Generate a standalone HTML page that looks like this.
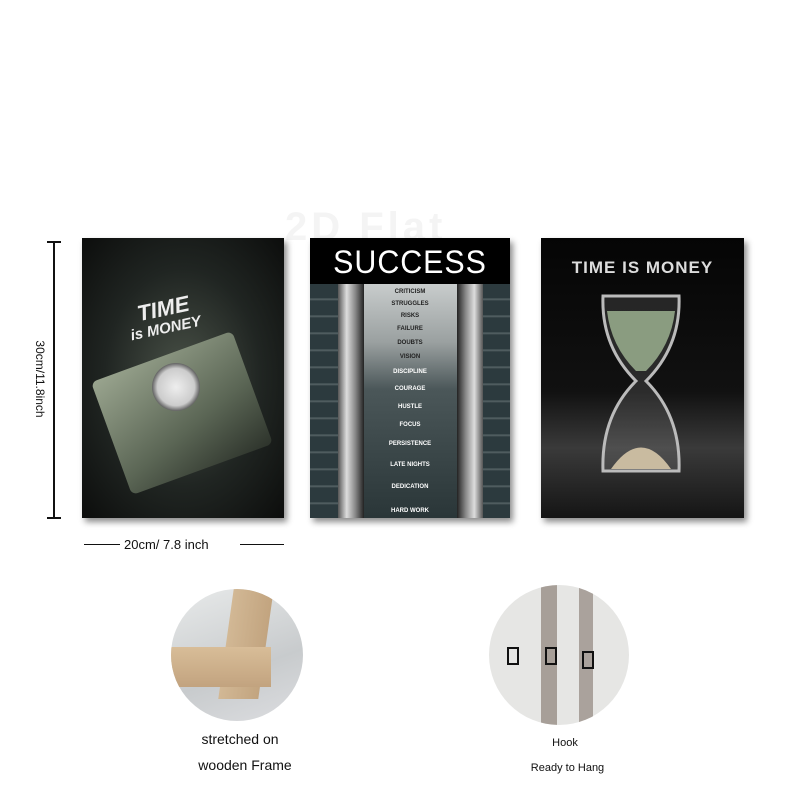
<!DOCTYPE html>
<html><head><meta charset="utf-8"><style>
body{margin:0;width:800px;height:800px;background:#fff;position:relative;overflow:hidden;font-family:"Liberation Sans",sans-serif}
.a{position:absolute}
.p{position:absolute;box-shadow:3px 4px 6px rgba(0,0,0,.45)}
.st{position:absolute;left:0;width:100%;text-align:center;color:#fff;font-size:6px;font-weight:bold}
</style></head><body>
<div class="a" style="left:285px;top:205px;font-size:40px;color:#f4f4f4;font-weight:bold;letter-spacing:4px">2D Flat</div>
<div class="a" style="left:53px;top:241px;width:2px;height:278px;background:#111"></div>
<div class="a" style="left:47px;top:241px;width:14px;height:2px;background:#111"></div>
<div class="a" style="left:47px;top:517px;width:14px;height:2px;background:#111"></div>
<div class="a" style="left:-22px;top:372px;width:124px;font-size:12px;transform:rotate(90deg);text-align:center;color:#111">30cm/11.8inch</div>
<div class="a" style="left:84px;top:544px;width:36px;height:1px;background:#111"></div>
<div class="a" style="left:240px;top:544px;width:44px;height:1px;background:#111"></div>
<div class="a" style="left:124px;top:537px;font-size:13px;color:#111">20cm/ 7.8 inch</div>
<div class="p" style="left:82px;top:238px;width:202px;height:280px;background:radial-gradient(ellipse at 50% 50%,#4a5248 0%,#202522 55%,#0c0d0c 100%);overflow:hidden">
 <div class="a" style="left:55px;top:58px;color:#eee;font-weight:bold;font-style:italic;font-size:22px;transform:rotate(-12deg)">TIME</div>
 <div class="a" style="left:48px;top:82px;color:#eee;font-weight:bold;font-style:italic;font-size:15px;transform:rotate(-12deg)">is MONEY</div>
 <div class="a" style="left:25px;top:115px;width:150px;height:120px;background:linear-gradient(160deg,#9aa58f,#5b6655 60%,#2d332b);transform:rotate(-20deg);border-radius:6px"></div>
 <div class="a" style="left:70px;top:125px;width:48px;height:48px;border-radius:50%;background:radial-gradient(circle,#eee 0,#ccc 55%,#666 70%,#333 100%)"></div>
</div>
<div class="p" style="left:310px;top:238px;width:200px;height:280px;background:#1d2a2e;overflow:hidden">
 <div class="a" style="left:0;top:0;width:200px;height:46px;background:#000"></div>
 <div class="a" style="left:0;top:6px;width:200px;text-align:center;color:#fff;font-size:32px;letter-spacing:1px;transform:scaleX(0.95)">SUCCESS</div>
 <div class="a" style="left:0;top:46px;width:200px;height:234px;background:repeating-linear-gradient(180deg,#2c3a3e 0,#2c3a3e 14px,#5a676a 15px,#2c3a3e 17px)"></div>
 <div class="a" style="left:28px;top:46px;width:26px;height:234px;background:linear-gradient(90deg,#555,#ddd,#888,#222)"></div>
 <div class="a" style="left:147px;top:46px;width:26px;height:234px;background:linear-gradient(90deg,#222,#888,#ddd,#555)"></div>
 <div class="a" style="left:54px;top:46px;width:93px;height:234px;background:linear-gradient(180deg,#c8cccc 0,#9aa0a0 25%,#4b5759 45%,#2a3638 100%)"></div>
 <div class="st" style="top:51px;color:#222">CRITICISM</div><div class="st" style="top:63px;color:#222">STRUGGLES</div>
 <div class="st" style="top:75px;color:#222">RISKS</div><div class="st" style="top:88px;color:#222">FAILURE</div>
 <div class="st" style="top:102px;color:#222">DOUBTS</div><div class="st" style="top:116px;color:#222">VISION</div>
 <div class="st" style="top:131px">DISCIPLINE</div><div class="st" style="top:148px">COURAGE</div>
 <div class="st" style="top:166px">HUSTLE</div><div class="st" style="top:184px">FOCUS</div>
 <div class="st" style="top:203px">PERSISTENCE</div><div class="st" style="top:224px">LATE NIGHTS</div>
 <div class="st" style="top:246px">DEDICATION</div><div class="st" style="top:270px">HARD WORK</div>
</div>
<div class="p" style="left:541px;top:238px;width:203px;height:280px;background:linear-gradient(180deg,#050505 0,#111 55%,#3a3a3a 75%,#151515 100%)">
 <div class="a" style="left:0;top:20px;width:203px;text-align:center;color:#ddd;font-weight:bold;font-size:17px;letter-spacing:1px">TIME IS MONEY</div>
 <svg class="a" style="left:50px;top:48px" width="100" height="200" viewBox="0 0 100 200">
  <path d="M12 10 Q10 60 45 95 Q10 130 12 185 L88 185 Q90 130 55 95 Q90 60 88 10 Z" fill="rgba(200,200,200,.15)" stroke="#bbb" stroke-width="3"/>
  <path d="M16 25 L84 25 Q80 60 55 85 L45 85 Q20 60 16 25Z" fill="#8a9c80"/>
  <path d="M20 183 Q50 140 80 183Z" fill="#c9bba0"/>
 </svg>
</div>
<div class="a" style="left:171px;top:589px;width:132px;height:132px;border-radius:50%;overflow:hidden;background:linear-gradient(160deg,#e8eaea,#c8cbcd 60%,#dcdde0)">
 <div class="a" style="left:55px;top:0;width:40px;height:110px;background:linear-gradient(90deg,#d2b895,#c2a47f);transform:skewX(-8deg)"></div>
 <div class="a" style="left:0;top:58px;width:100px;height:40px;background:linear-gradient(180deg,#d8bd98,#c2a37f)"></div>
</div>
<div class="a" style="left:489px;top:585px;width:140px;height:140px;border-radius:50%;overflow:hidden;background:#e6e6e4">
 <div class="a" style="left:52px;top:0;width:16px;height:140px;background:#a79f98"></div>
 <div class="a" style="left:90px;top:0;width:14px;height:140px;background:#aaa29c"></div>
 <div class="a" style="left:18px;top:62px;width:8px;height:14px;border:2px solid #111"></div>
 <div class="a" style="left:56px;top:62px;width:8px;height:14px;border:2px solid #111"></div>
 <div class="a" style="left:93px;top:66px;width:8px;height:14px;border:2px solid #111"></div>
</div>
<div class="a" style="left:160px;top:731px;width:160px;text-align:center;font-size:14px;color:#111">stretched on</div>
<div class="a" style="left:160px;top:757px;width:170px;text-align:center;font-size:14px;color:#111">wooden Frame</div>
<div class="a" style="left:520px;top:737px;width:90px;text-align:center;font-size:11px;color:#111">Hook</div>
<div class="a" style="left:510px;top:762px;width:115px;text-align:center;font-size:11px;color:#111">Ready to Hang</div>
</body></html>
